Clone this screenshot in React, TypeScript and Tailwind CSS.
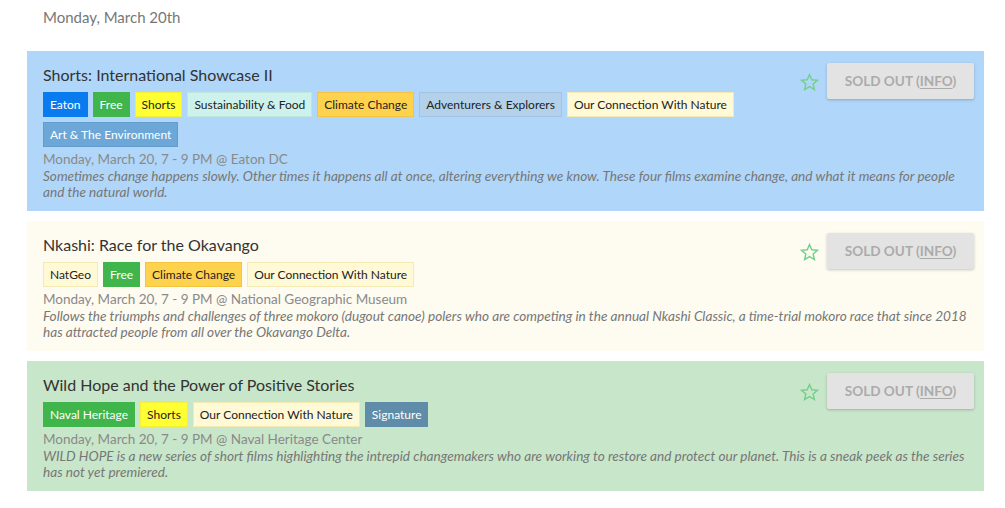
import React from "react";

type Tag = { label: string; cls: string };

type Film = {
  title: string;
  bg: string;
  tags: Tag[];
  when: string;
  desc: string;
};

// warna tag
const T = {
  eaton: "bg-[#0a7bef] border-[#0a7bef] text-white",
  free: "bg-[#40b54b] border-[#40b54b] text-white",
  shorts: "bg-[#ffff33] border-[#f2ee3a] text-[#222]",
  food: "bg-[#cdf2eb] border-[#bde6de] text-[#222]",
  climate: "bg-[#ffd24d] border-[#f2c444] text-[#222]",
  adventure: "bg-[#b3d1ea] border-[#a3c4e0] text-[#222]",
  nature: "bg-[#fff9d6] border-[#f4ebb4] text-[#222]",
  art: "bg-[#6da7d7] border-[#629ccc] text-white",
  natgeo: "bg-[#fff9d6] border-[#f4ebb4] text-[#222]",
  signature: "bg-[#5f8ca8] border-[#5f8ca8] text-white",
};

const films: Film[] = [
  {
    title: "Shorts: International Showcase II",
    bg: "bg-[#b0d6f9]",
    tags: [
      { label: "Eaton", cls: T.eaton },
      { label: "Free", cls: T.free },
      { label: "Shorts", cls: T.shorts },
      { label: "Sustainability & Food", cls: T.food },
      { label: "Climate Change", cls: T.climate },
      { label: "Adventurers & Explorers", cls: T.adventure },
      { label: "Our Connection With Nature", cls: T.nature },
      { label: "Art & The Environment", cls: T.art },
    ],
    when: "Monday, March 20, 7 - 9 PM @ Eaton DC",
    desc: "Sometimes change happens slowly. Other times it happens all at once, altering everything we know. These four films examine change, and what it means for people and the natural world.",
  },
  {
    title: "Nkashi: Race for the Okavango",
    bg: "bg-[#fefbf1]",
    tags: [
      { label: "NatGeo", cls: T.natgeo },
      { label: "Free", cls: T.free },
      { label: "Climate Change", cls: T.climate },
      { label: "Our Connection With Nature", cls: T.nature },
    ],
    when: "Monday, March 20, 7 - 9 PM @ National Geographic Museum",
    desc: "Follows the triumphs and challenges of three mokoro (dugout canoe) polers who are competing in the annual Nkashi Classic, a time-trial mokoro race that since 2018 has attracted people from all over the Okavango Delta.",
  },
  {
    title: "Wild Hope and the Power of Positive Stories",
    bg: "bg-[#c8e6c9]",
    tags: [
      { label: "Naval Heritage", cls: T.free },
      { label: "Shorts", cls: T.shorts },
      { label: "Our Connection With Nature", cls: T.nature },
      { label: "Signature", cls: T.signature },
    ],
    when: "Monday, March 20, 7 - 9 PM @ Naval Heritage Center",
    desc: "WILD HOPE is a new series of short films highlighting the intrepid changemakers who are working to restore and protect our planet. This is a sneak peek as the series has not yet premiered.",
  },
];

const StarOutline: React.FC = () => (
  <svg width="19" height="19" viewBox="0 0 24 24" className="mt-[10px]">
    <polygon
      points="12,2 14.9,8.6 22,9.3 16.6,14 18.2,21 12,17.3 5.8,21 7.4,14 2,9.3 9.1,8.6"
      fill="none"
      stroke="#74d08a"
      strokeWidth="1.8"
      strokeLinejoin="miter"
    />
  </svg>
);

const FilmCard: React.FC<{ film: Film }> = ({ film }) => (
  <div className={`${film.bg} pl-4 pr-[14px] pt-3 pb-[11px]`}>
    {/* tombol kanan */}
    <div className="float-right flex items-start gap-[8px] ml-4 -mr-[4px]">
      <StarOutline />
      <button className="w-[147px] h-[36px] bg-[#e3e3e3] text-[#ababab] text-[13.6px] font-bold uppercase shadow-[0_1px_3px_rgba(0,0,0,0.22)] rounded-[2px]">
        Sold Out (<span className="underline underline-offset-2">Info</span>)
      </button>
    </div>

    <h3 className="text-[16px] leading-[24px] text-[#333]">{film.title}</h3>

    <div className="flex flex-wrap gap-[5px] mt-[5px]">
      {film.tags.map((t) => (
        <span
          key={t.label}
          className={`${t.cls} border h-[25px] px-[6px] flex items-center text-[12px] leading-none`}
        >
          {t.label}
        </span>
      ))}
    </div>

    <div className="mt-[3px] text-[13.5px] leading-[18px] text-[#8a8a8a]">{film.when}</div>
    <p className="text-[13.6px] leading-[16px] italic text-[#777]">{film.desc}</p>
  </div>
);

export default function App() {
  return (
    <div className="bg-white min-h-screen pl-[27px] pr-[21px] font-['Lato','Liberation_Sans',sans-serif]">
      <div className="pl-4 pt-[7px] text-[15px] leading-[21px] text-[#777]">Monday, March 20th</div>
      <div className="mt-[23px] flex flex-col gap-[10px]">
        {films.map((f) => (
          <FilmCard key={f.title} film={f} />
        ))}
      </div>
    </div>
  );
}
